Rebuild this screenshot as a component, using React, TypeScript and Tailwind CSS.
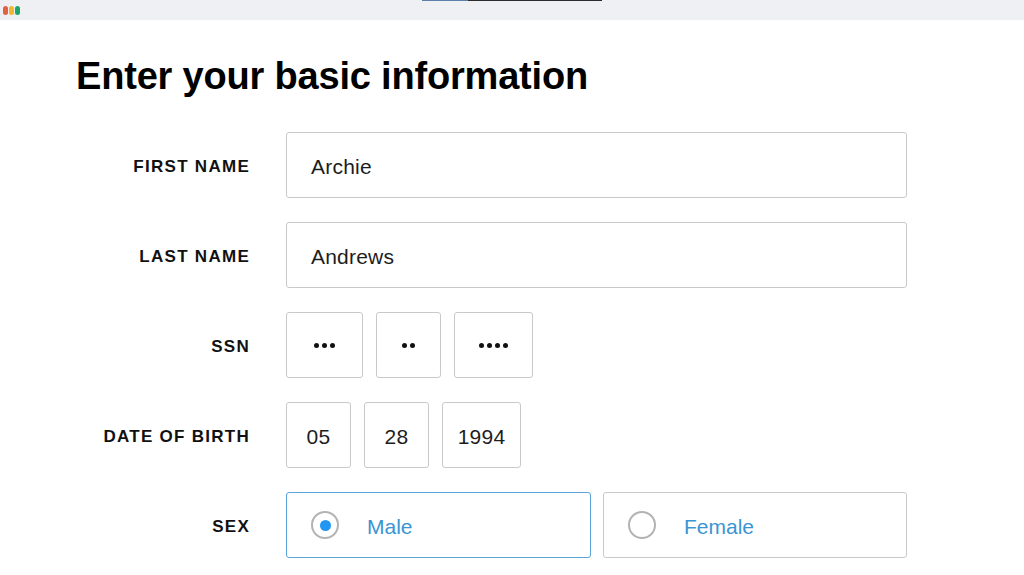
import { useState } from "react";

function Field({ label, children, gap = "gap-[13px]" }: { label: string; children: React.ReactNode; gap?: string }) {
  return (
    <div className="flex items-center">
      <div className="w-[174px] pt-[3px] text-right text-[17px] font-bold uppercase tracking-[0.075em] text-[#111]">
        {label}
      </div>
      <div className={`ml-[36px] flex ${gap}`}>{children}</div>
    </div>
  );
}

function Box({ w, value, center }: { w: string; value: string; center?: boolean }) {
  return (
    <div
      className={`${w} flex h-[66px] items-center rounded-[3px] border border-[#c9c9c9] bg-white pt-[3px] text-[21px] tracking-[0.01em] text-[#1d1d1d] ${
        center ? "justify-center" : "px-[24px]"
      }`}
    >
      {value}
    </div>
  );
}

function Dots({ w, n }: { w: string; n: number }) {
  return (
    <div className={`${w} flex h-[66px] items-center justify-center gap-[3px] rounded-[3px] border border-[#c9c9c9] bg-white`}>
      {Array.from({ length: n }).map((_, i) => (
        <span key={i} className="h-[5px] w-[5px] rounded-full bg-[#111]" />
      ))}
    </div>
  );
}

export default function App() {
  const [sex, setSex] = useState("male");

  return (
    <div className="min-h-[575px] w-[1024px] bg-white font-['Liberation_Sans',Arial,sans-serif]">
      <div className="relative flex h-[20px] items-center gap-[1px] bg-[#eef0f3] pl-[3px]">
        <span className="h-[9px] w-[5px] rounded-full bg-[#e0623f]" />
        <span className="h-[9px] w-[5px] rounded-full bg-[#f0b72f]" />
        <span className="h-[9px] w-[5px] rounded-full bg-[#1aa56b]" />
        <div className="absolute left-[422px] top-0 flex h-[1px] w-[180px]">
          <span className="w-[46px] bg-[#5b7fa8]" />
          <span className="flex-1 bg-[#2b2b2b]" />
        </div>
      </div>

      <div className="px-[76px] pt-[34px]">
        <h1 className="text-[38px] font-bold leading-[44px] tracking-[-0.005em] text-black">
          Enter your basic information
        </h1>

        <div className="mt-[34px] flex flex-col gap-[24px]">
          <Field label="First Name">
            <Box w="w-[621px]" value="Archie" />
          </Field>
          <Field label="Last Name">
            <Box w="w-[621px]" value="Andrews" />
          </Field>
          <Field label="SSN">
            <Dots w="w-[77px]" n={3} />
            <Dots w="w-[65px]" n={2} />
            <Dots w="w-[79px]" n={4} />
          </Field>
          <Field label="Date of Birth">
            <Box w="w-[65px]" value="05" center />
            <Box w="w-[65px]" value="28" center />
            <Box w="w-[79px]" value="1994" center />
          </Field>
          <Field label="Sex" gap="gap-[12px]">
            {[
              { id: "male", text: "Male", w: "w-[305px]" },
              { id: "female", text: "Female", w: "w-[304px]" },
            ].map((o) => {
              const on = sex === o.id;
              return (
                <button
                  key={o.id}
                  onClick={() => setSex(o.id)}
                  className={`${o.w} flex h-[66px] items-center rounded-[3px] border bg-white pl-[24px] text-left ${
                    on ? "border-[#5aa6dc]" : "border-[#c9c9c9]"
                  }`}
                >
                  <span className="flex h-[28px] w-[28px] items-center justify-center rounded-full border-2 border-[#b3b3b3]">
                    {on && <span className="h-[11px] w-[11px] rounded-full bg-[#2196f3]" />}
                  </span>
                  <span className="ml-[28px] pt-[3px] text-[21px] text-[#3b95d3]">{o.text}</span>
                </button>
              );
            })}
          </Field>
        </div>
      </div>
    </div>
  );
}
